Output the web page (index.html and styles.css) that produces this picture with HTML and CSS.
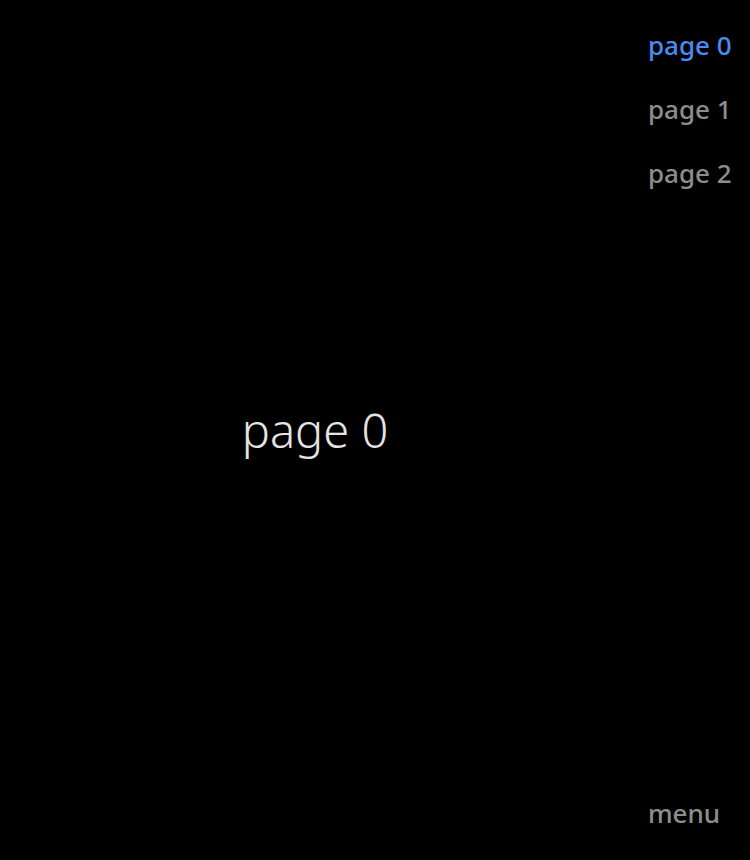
FILE: index.html
```html
<!DOCTYPE html>
<html>
<head>
<meta charset="utf-8">
<link rel="stylesheet" href="styles.css">
</head>
<body>
<div class="app">
  <main class="main"><span class="title">page 0</span></main>
  <aside class="side">
    <nav class="nav">
      <a class="nav-item active">page 0</a>
      <a class="nav-item">page 1</a>
      <a class="nav-item">page 2</a>
    </nav>
    <a class="menu">menu</a>
  </aside>
</div>
</body>
</html>
```

FILE: styles.css
```css
html, body { margin: 0; padding: 0; background: #000; }
body { font-family: "Noto Sans", sans-serif; }
.app { display: flex; width: 750px; height: 860px; }
.main { flex: 1; display: flex; align-items: center; justify-content: center; }
.title { color: #e4e4e4; font-size: 47px; font-weight: 300; }
.side { width: 102px; display: flex; flex-direction: column; justify-content: space-between; padding: 28px 0 30px 18px; }
.nav { display: flex; flex-direction: column; gap: 30px; }
.nav-item { color: #8d8d8d; font-size: 26px; font-weight: 500; line-height: 34px; }
.nav-item.active { color: #4a8cf5; }
.menu { color: #8d8d8d; font-size: 26px; font-weight: 500; line-height: 34px; }
```
